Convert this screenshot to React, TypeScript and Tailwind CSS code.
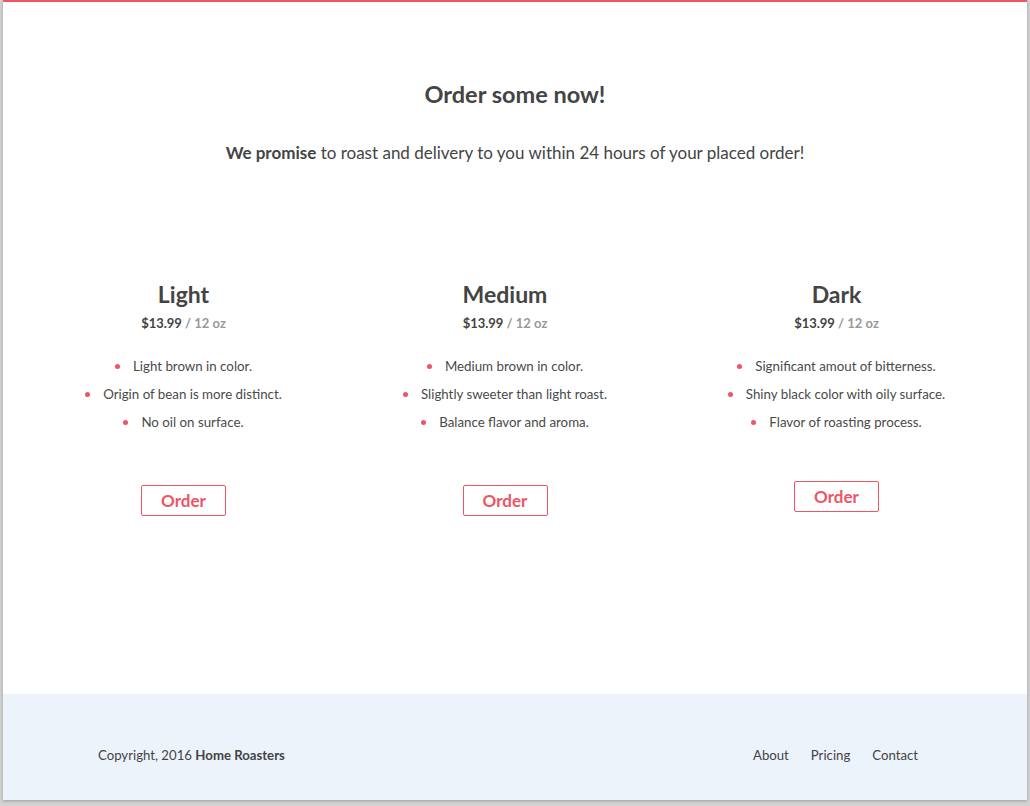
const roasts = [
  {
    name: "Light",
    width: "w-[198px]",
    btn: "mt-[49px]",
    notes: ["Light brown in color.", "Origin of bean is more distinct.", "No oil on surface."],
  },
  {
    name: "Medium",
    width: "w-[205px]",
    btn: "mt-[49px]",
    notes: ["Medium brown in color.", "Slightly sweeter than light roast.", "Balance flavor and aroma."],
  },
  {
    name: "Dark",
    width: "w-[218px]",
    btn: "mt-[45px]",
    notes: ["Significant amout of bitterness.", "Shiny black color with oily surface.", "Flavor of roasting process."],
  },
];

export default function App() {
  return (
    <div
      className="h-[806px] w-[1030px] bg-[#d2d2d2] px-[3px] pb-[6px] text-[#444]"
      style={{ fontFamily: "Lato, 'Noto Sans', sans-serif" }}
    >
      <div className="flex h-[800px] flex-col border-t-2 border-[#ed5565] bg-white shadow-[0_1px_3px_rgba(0,0,0,0.25)]">
        <main className="flex-1">
          <section className="pt-[76px] text-center">
            <h1 className="text-[23.5px] leading-8 font-bold">Order some now!</h1>
            <p className="mt-[29px] text-[17px] leading-7">
              <strong className="font-bold">We promise</strong> to roast and delivery to you within 24 hours of your placed order!
            </p>
          </section>

          <section className="mt-[111px] flex justify-center gap-[120px]">
            {roasts.map((r) => (
              <div key={r.name} className={`${r.width} flex flex-col items-center text-center`}>
                <h2 className="text-[23px] leading-8 font-bold">{r.name}</h2>
                <p className="mt-1 text-[13px] leading-[18px] font-bold">
                  $13.99 <span className="text-[#999]">/ 12 oz</span>
                </p>
                <ul className="mt-5 text-[13.3px] leading-7 text-[#4a4a4a]">
                  {r.notes.map((n) => (
                    <li key={n} className="flex items-center justify-center whitespace-nowrap">
                      <span className="mr-[13px] h-[5px] w-[5px] rounded-full bg-[#ed5565]" />
                      {n}
                    </li>
                  ))}
                </ul>
                <button
                  className={`${r.btn} h-[31px] w-[85px] rounded-[2px] border border-[#ed5565] text-[17px] font-bold text-[#ed5565]`}
                >
                  Order
                </button>
              </div>
            ))}
          </section>
        </main>

        <footer className="flex h-[106px] items-start justify-between bg-[#edf3fb] pt-[51px] pr-[109px] pl-[95px] text-[13.2px] leading-5">
          <p>
            Copyright, 2016 <strong className="font-bold">Home Roasters</strong>
          </p>
          <nav className="flex gap-[22px]">
            <a href="#">About</a>
            <a href="#">Pricing</a>
            <a href="#">Contact</a>
          </nav>
        </footer>
      </div>
    </div>
  );
}
